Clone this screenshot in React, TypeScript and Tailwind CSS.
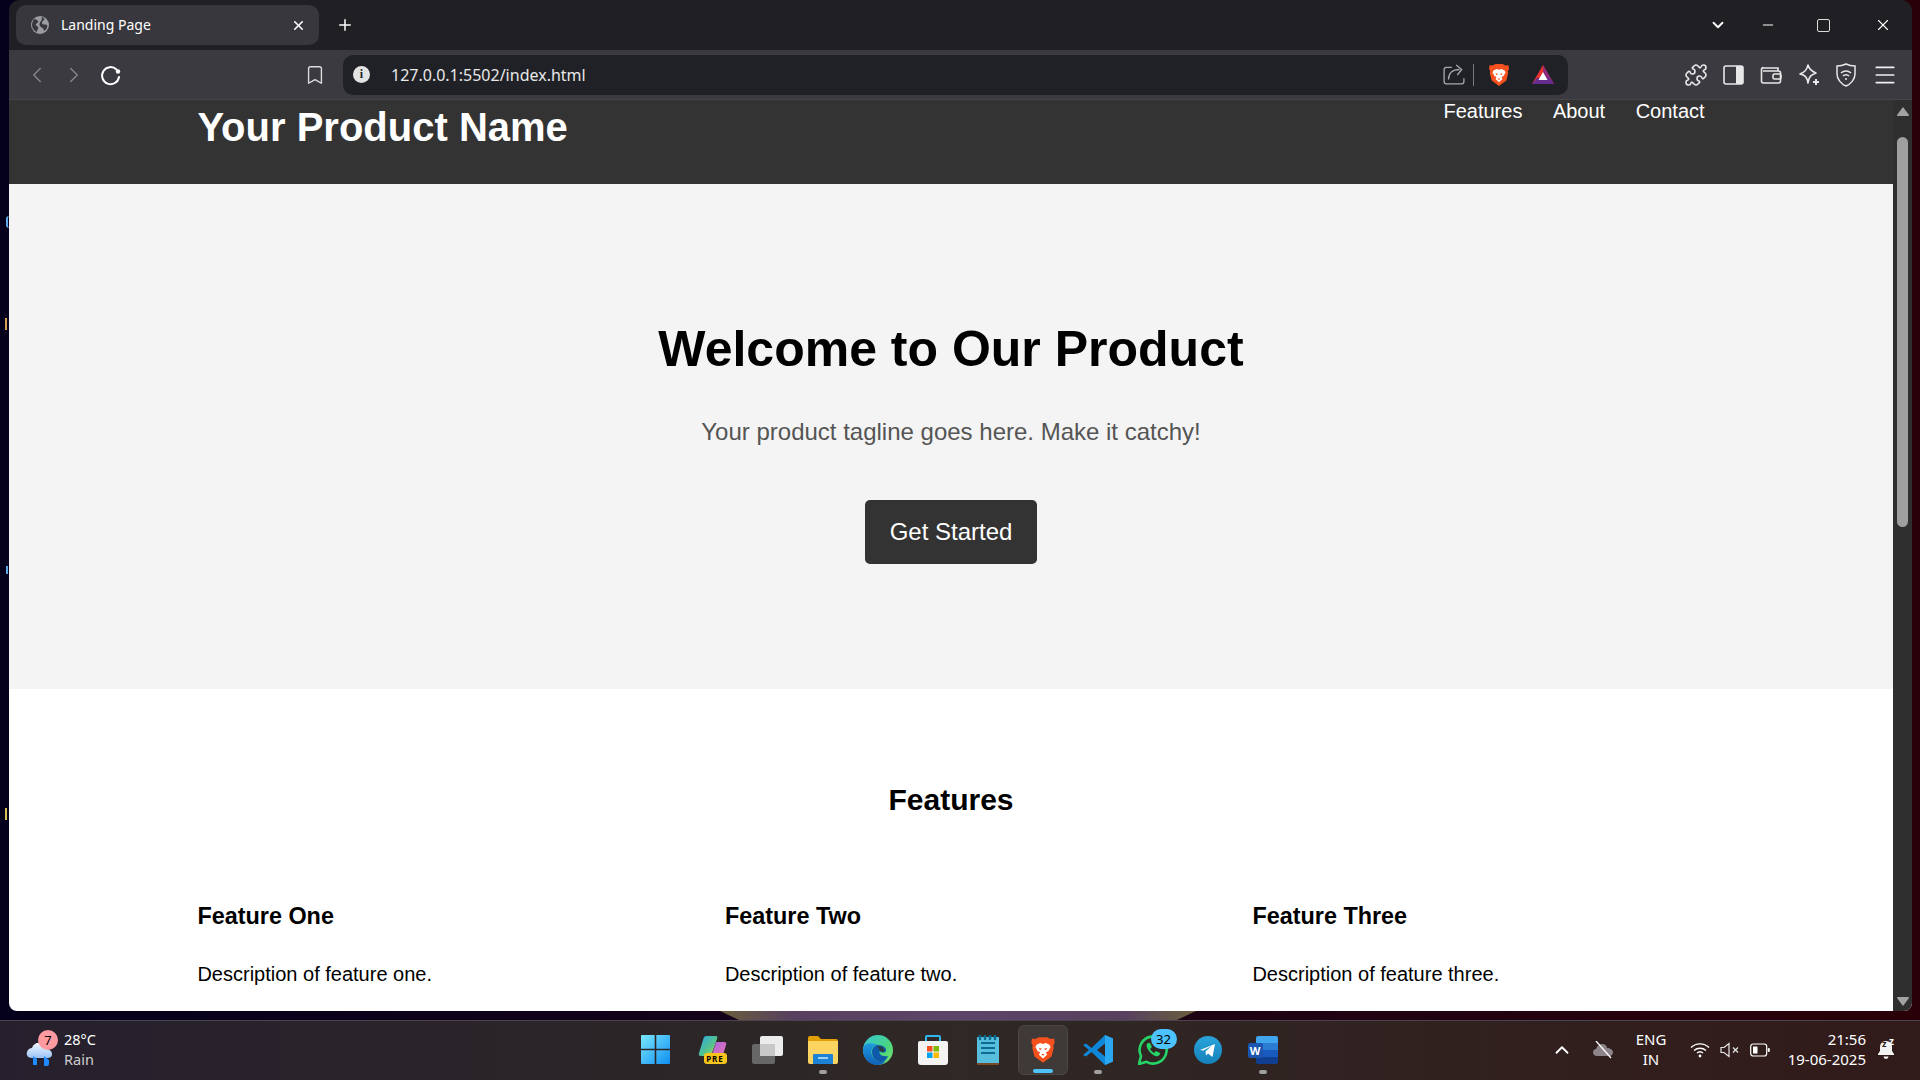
import React from "react";
import { ChevronLeft, ChevronRight, Bookmark, Puzzle, Plus, X, ChevronDown, Minus, Menu, ChevronUp } from "lucide-react";

const Brave = ({ s = 24 }: { s?: number }) => (
  <svg width={s} height={s} viewBox="0 0 24 24">
    <path d="M5.5 2.5 L8.5 1 H15.5 L18.5 2.5 L21.5 2.2 L22 6 L20.8 8 L21.2 10 L19.3 17.5 L12 23 L4.7 17.5 L2.8 10 L3.2 8 L2 6 L2.5 2.2Z" fill="#f4511e" />
    <path d="M6.5 7.5 L9.5 6 L12 6.8 L14.5 6 L17.5 7.5 L18.5 9.5 L16.5 13 L14.5 14 L15.5 16 L12 19.3 L8.5 16 L9.5 14 L7.5 13 L5.5 9.5Z" fill="#fff" />
    <path d="M8.5 10 L11 11 L9.5 12.3Z M15.5 10 L13 11 L14.5 12.3Z M10.5 15.5 H13.5 L12 17Z" fill="#f4511e" />
  </svg>
);

const IconBox = ({ children, w = 55 }: { children: React.ReactNode; w?: number }) => (
  <div className="flex items-center justify-center shrink-0 h-[52px]" style={{ width: w }}>{children}</div>
);

const Dot = () => <span className="absolute bottom-[2px] left-1/2 -translate-x-1/2 w-[8px] h-[4px] rounded-full bg-[#a0a0a0]" />;

function Taskbar() {
  return (
    <div className="h-[60px] border-t border-[#4b4450] pb-[2px] grid grid-cols-[1fr_auto_1fr] items-center bg-gradient-to-r from-[#26202e] via-[#2f2825] to-[#311a1a] text-white [font-family:'Noto_Sans',sans-serif]">
      <div className="flex items-center pl-[24px] gap-[4px]">
        <div className="relative w-[36px] h-[36px]">
          <svg width="36" height="36" viewBox="0 0 36 36">
            <defs><linearGradient id="cl" x1="0" y1="0" x2="0" y2="1"><stop offset="0" stopColor="#f2f7ff" /><stop offset="1" stopColor="#9cc4f5" /></linearGradient></defs>
            <path d="M8 26c-4 0-6-3-5-6 1-3 3-4 5-4 1-4 5-6 9-5 3 1 5 3 5 6 3 0 6 2 6 5s-2 4-5 4Z" fill="url(#cl)" />
            <path d="M9 24l4 3v6h-4Z M20 24l5 4v4q0 2-3 2t-2-2Z" fill="#1f8bff" />
          </svg>
          <span className="absolute left-[14px] top-[-2px] w-[20px] h-[20px] rounded-full bg-[#ff9aa0] text-black text-[13px] leading-[20px] text-center">7</span>
        </div>
        <div className="flex flex-col text-[14.5px] leading-[20px] -mt-[2px]">
          <span>28°C</span>
          <span className="text-[#cfcfcf]">Rain</span>
        </div>
      </div>

      <div className="flex items-center">
        <IconBox>
          <svg width="29" height="29" viewBox="0 0 29 29" className="-translate-x-[2px]">
            <defs><linearGradient id="win" x1="0" y1="0" x2="1" y2="1"><stop offset="0" stopColor="#7ae8ff" /><stop offset="1" stopColor="#0f8ff0" /></linearGradient></defs>
            <path d="M0 1q0-1 1-1h12.7v13.7H0ZM15.3 0H28q1 0 1 1v12.7H15.3ZM0 15.3h13.7V29H1q-1 0-1-1ZM15.3 15.3H29V28q0 1-1 1H15.3Z" fill="url(#win)" />
          </svg>
        </IconBox>
        <IconBox>
          <div className="relative w-[30px] h-[30px]">
            <svg width="30" height="26" viewBox="0 0 30 26">
              <defs>
                <linearGradient id="co1" x1="0" y1="0" x2="1" y2="1"><stop offset="0" stopColor="#2aa7e6" /><stop offset=".6" stopColor="#58c48a" /><stop offset="1" stopColor="#d8d84a" /></linearGradient>
                <linearGradient id="co2" x1="0" y1="0" x2="1" y2="1"><stop offset="0" stopColor="#a463e0" /><stop offset="1" stopColor="#f078b0" /></linearGradient>
              </defs>
              <path d="M8 1h10q2 0 1 3l-5 14q-1 3-4 3H3q-3 0-2-3L5 5q1-4 3-4Z" fill="url(#co1)" />
              <path d="M18 7h8q3 0 2 3l-3 10q-1 3-4 3h-8Z" fill="url(#co2)" />
            </svg>
            <span className="absolute left-[6px] top-[18px] w-[23px] h-[11px] rounded-[3px] bg-[#f7c41c] text-black text-[8px] font-bold leading-[11px] text-center tracking-[1px]">PRE</span>
          </div>
        </IconBox>
        <IconBox>
          <div className="relative w-[31px] h-[28px]">
            <span className="absolute right-0 top-0 w-[23px] h-[20px] rounded-[2px] bg-[#ececec]" />
            <span className="absolute left-0 bottom-0 w-[23px] h-[20px] rounded-[2px] bg-[#6f6f6f]/90" />
            <span className="absolute left-[8px] top-[8px] w-[15px] h-[12px] bg-[#c8c8c8]" />
          </div>
        </IconBox>
        <IconBox>
          <div className="relative h-[52px] flex items-center">
            <svg width="30" height="28" viewBox="0 0 30 28">
              <path d="M0 2q0-2 2-2h8l3 3h15q2 0 2 2v4H0Z" fill="#e3a008" />
              <path d="M0 5h30v21q0 2-2 2H2q-2 0-2-2Z" fill="#fcd462" />
              <path d="M5 19q0-1 1-1h18q1 0 1 1v9H5Z" fill="#1b82d6" />
              <rect x="10" y="21" width="10" height="2" fill="#9fd0f5" />
            </svg>
            <Dot />
          </div>
        </IconBox>
        <IconBox>
          <svg width="30" height="30" viewBox="0 0 30 30">
            <defs>
              <linearGradient id="ed" x1="0" y1="0" x2="1" y2="1"><stop offset="0" stopColor="#36c5d8" /><stop offset=".6" stopColor="#4bd67e" /><stop offset="1" stopColor="#7ee06a" /></linearGradient>
              <linearGradient id="ed2" x1="0" y1="0" x2="0" y2="1"><stop offset="0" stopColor="#1f9be0" /><stop offset="1" stopColor="#0f5fb5" /></linearGradient>
            </defs>
            <circle cx="15" cy="15" r="15" fill="url(#ed)" />
            <path d="M0 15C1 6 9 8 15 10c-5 0-8 5-6 10 2 6 9 9 14 6-3 3-6 4-8 4C7 30 0 24 0 15Z" fill="url(#ed2)" />
            <path d="M15 10c5 0 9 3 8 6-1 2-5 2-6 0-2 3 2 6 8 5-1 3-3 5-5 6-5 1-11-3-11-10 0-4 3-7 6-7Z" fill="#0f5aa8" />
            <path d="M15 11c4 0 7 3 6.500 5-1 1.500-3.500 1-4.500 0-1-2-3-4-2-5Z" fill="#2f3a36" opacity=".9" />
          </svg>
        </IconBox>
        <IconBox>
          <svg width="30" height="30" viewBox="0 0 30 30">
            <path d="M8 6V2q0-1 1-1h12q1 0 1 1v4" fill="none" stroke="#2fb8ee" strokeWidth="2" />
            <path d="M0 8q0-2 2-2h26q2 0 2 2v19q0 3-3 3H3q-3 0-3-3Z" fill="#f3f3f3" />
            <rect x="9" y="11" width="5.500" height="5.500" fill="#f25022" /><rect x="15.500" y="11" width="5.500" height="5.500" fill="#7fba00" />
            <rect x="9" y="17.500" width="5.500" height="5.500" fill="#00a4ef" /><rect x="15.500" y="17.500" width="5.500" height="5.500" fill="#ffb900" />
          </svg>
        </IconBox>
        <IconBox>
          <svg width="24" height="30" viewBox="0 0 24 30" className="translate-x-[1px]">
            <rect x="0" y="2" width="22" height="28" fill="#7a4a22" rx="1" />
            <rect x="0" y="2" width="22" height="26" fill="#58bede" />
            <path d="M4 8h14M4 13h14M4 18h14" stroke="#0f6a8f" strokeWidth="2" />
            <path d="M3 0v4M8 0v4M13 0v4M18 0v4" stroke="#0a6b8e" strokeWidth="2.500" strokeLinecap="round" />
          </svg>
        </IconBox>
        <div className="relative w-[50px] h-[50px] mx-[2.5px] rounded-[6px] bg-[#3f3a38] border border-[#4a4644] flex items-center justify-center">
          <Brave s={28} />
          <span className="absolute bottom-[1px] left-1/2 -translate-x-1/2 w-[20px] h-[4px] rounded-full bg-[#4fc3f7]" />
        </div>
        <IconBox>
          <div className="relative h-[52px] flex items-center">
            <svg width="30" height="30" viewBox="0 0 30 30">
              <path d="M22 0l8 3.500v23L22 30 8.500 17 3 21.500 0 20l6-5-6-5 3-1.500L8.500 13Zm0 8.500L14 15l8 6.500Z" fill="#0f87d8" />
              <path d="M22 0l8 3.500v23L22 30Z" fill="#2aa7ee" />
            </svg>
            <Dot />
          </div>
        </IconBox>
        <IconBox>
          <div className="relative w-[30px] h-[30px]">
            <svg width="30" height="30" viewBox="0 0 30 30">
              <path d="M1 29l2-8a13.500 13.500 0 1 1 5.500 5.800Z" fill="none" stroke="#25d366" strokeWidth="2.600" strokeLinejoin="round" />
              <path d="M10 8c-2 1-2 4 1 8s7 6 9 5 2-2 2-3l-4-2-2 2c-2-1-3-3-4-4l2-2-2-4Z" fill="#25d366" />
            </svg>
            <span className="absolute left-[13px] top-[-6px] w-[26px] h-[20px] rounded-full bg-[#4cc2ff] text-black text-[13px] leading-[20px] text-center">32</span>
          </div>
        </IconBox>
        <IconBox>
          <svg width="28" height="28" viewBox="0 0 28 28">
            <defs><linearGradient id="tg" x1="0" y1="0" x2="0" y2="1"><stop offset="0" stopColor="#2aa4dc" /><stop offset="1" stopColor="#1580ba" /></linearGradient></defs>
            <circle cx="14" cy="14" r="14" fill="url(#tg)" />
            <path d="M6 14L21 8l-2.500 13-4.500-3.500-2 2-.5-4 6-5.500-8 4.500Z" fill="#fff" />
          </svg>
        </IconBox>
        <IconBox>
          <div className="relative h-[52px] w-[30px] flex items-center">
            <div className="relative w-[30px] h-[28px]">
              <div className="absolute right-0 top-0 w-[22px] h-[28px] rounded-[2px] overflow-hidden flex flex-col">
                <span className="flex-1 bg-[#41a5ee]" /><span className="flex-1 bg-[#2b7cd3]" /><span className="flex-1 bg-[#185abd]" /><span className="flex-1 bg-[#103f91]" />
              </div>
              <span className="absolute left-0 top-[7px] w-[15px] h-[15px] rounded-[2px] bg-[#1a55b0] text-white text-[11px] font-bold leading-[15px] text-center">W</span>
            </div>
            <Dot />
          </div>
        </IconBox>
      </div>

      <div className="flex items-center justify-end">
        <ChevronUp size={22} strokeWidth={2} className="text-white mr-[19px]" />
        <svg width="22" height="18" viewBox="0 0 22 18" className="mr-[21px]">
          <path d="M5 15c-3 0-4-2-4-4s2-3 3-3c1-3 3-5 6-5s5 2 5 4c3 0 6 2 6 4s-1 4-4 4Z" fill="#8c8488" />
          <path d="M4 0l15 17" stroke="#fff" strokeWidth="1.300" />
        </svg>
        <div className="flex flex-col items-center text-[15px] leading-[20px] w-[32px] mr-[23px] -mt-[2px]">
          <span>ENG</span>
          <span>IN</span>
        </div>
        <svg width="20" height="16" viewBox="0 0 20 16" fill="none" stroke="#fff" strokeWidth="1.400" className="mr-[10px]">
          <path d="M1 5.500a13 13 0 0 1 18 0M4 8.500a9 9 0 0 1 12 0M7 11a4.500 4.500 0 0 1 6 0" />
          <circle cx="10" cy="14" r="1.400" fill="#fff" stroke="none" />
        </svg>
        <svg width="20" height="16" viewBox="0 0 20 16" fill="none" stroke="#e8e8e8" strokeWidth="1.200" className="mr-[10px]">
          <path d="M1 5.500h3L9 1.500v13L4 10.500H1Z" />
          <path d="M13 5.500l5 5M18 5.500l-5 5" />
        </svg>
        <svg width="20" height="14" viewBox="0 0 20 14" fill="none" className="mr-[16px]">
          <rect x=".7" y="1" width="16" height="12" rx="2.500" stroke="#fff" strokeWidth="1.200" />
          <rect x="3" y="3.500" width="4.500" height="7" rx=".5" fill="#fff" />
          <rect x="17.800" y="5" width="2" height="4" rx="1" fill="#fff" />
        </svg>
        <div className="flex flex-col items-end text-[15px] leading-[20px] w-[80px] -mt-[2px]">
          <span>21:56</span>
          <span className="whitespace-nowrap">19-06-2025</span>
        </div>
        <div className="relative w-[18px] h-[20px] ml-[11px] mr-[25px]">
          <svg width="18" height="20" viewBox="0 0 18 20"><path d="M9 1c-4 0-6 3-6 6v4l-2 3v1h16v-1l-2-3V7c0-3-2-6-6-6ZM6.500 16.500a2.500 2.500 0 0 0 5 0Z" fill="#f2f2f2" /></svg>
          <span className="absolute left-[5px] top-[-3px] text-[9px] font-bold leading-[14px] text-[#2b1b1b]">z</span>
          <span className="absolute left-[12px] top-[-6px] text-[10px] font-bold leading-[14px] text-white">z</span>
        </div>
      </div>
    </div>
  );
}

function TabBar() {
  return (
    <div className="h-[50px] shrink-0 bg-[#1f1f24] flex items-center pl-[7px] text-white [font-family:'Noto_Sans',sans-serif]">
      <div className="w-[303px] h-[40px] rounded-[10px] bg-[#37373d] flex items-center pl-[15px] pr-[13px] gap-[12px]">
        <svg width="18" height="18" viewBox="0 0 18 18">
          <circle cx="9" cy="9" r="9" fill="#9a9ca1" />
          <path d="M3 3c2 0 3 1 4 2s-1 2-2 3 1 2 2 3-1 3-1 5c-3-1-5-4-5-7 0-2 1-4 2-6ZM11 1c2 1 3 2 2 3s-2 1-2 3 3 1 5 2c1 2-1 5-3 6 0-2-1-3-3-4s-2-4 0-6 0-3 1-4Z" fill="#37373d" />
        </svg>
        <span className="flex-1 text-[14px] leading-none whitespace-nowrap">Landing Page</span>
        <X size={15} strokeWidth={2.500} className="text-white" />
      </div>
      <Plus size={18} strokeWidth={2} className="ml-[17px] text-white" />
      <div className="flex-1" />
      <ChevronDown size={18} strokeWidth={2.500} className="text-white mr-[33px]" />
      <Minus size={16} strokeWidth={1.500} className="text-white mr-[41px]" />
      <span className="w-[13px] h-[13px] rounded-[2px] border-[1.5px] border-[#ddd] mr-[44px]" />
      <X size={18} strokeWidth={1.500} className="text-white mr-[20px]" />
    </div>
  );
}

function Toolbar() {
  return (
    <div className="h-[50px] shrink-0 bg-[#3a3a40] border-b border-[#444449] flex items-center pl-[15px] text-white [font-family:'Noto_Sans',sans-serif]">
      <ChevronLeft size={26} strokeWidth={1.300} className="text-[#85858a] mr-[11px]" />
      <ChevronRight size={26} strokeWidth={1.300} className="text-[#85858a] mr-[12px]" />
      <svg width="24" height="24" viewBox="0 0 24 24" fill="none" stroke="#fff" strokeWidth="2" strokeLinecap="round">
        <path d="M20 14a8.500 8.500 0 1 1-2.500-7.500" />
        <circle cx="19" cy="8.500" r="2.200" fill="#fff" stroke="none" />
      </svg>
      <div className="w-[181px]" />
      <Bookmark size={22} strokeWidth={1.500} className="text-[#dedede]" />
      <div className="ml-[17px] w-[1225px] h-[40px] rounded-[10px] bg-[#202126] flex items-center pl-[10px] pr-[13px]">
        <span className="w-[17px] h-[17px] rounded-full bg-[#e3e3e3] text-[#202126] text-[12px] font-bold leading-[17px] text-center [font-family:'Liberation_Serif',serif]">i</span>
        <span className="ml-[21px] flex-1 text-[16px] text-[#e8e8e8] leading-none">127.0.0.1:5502/index.html</span>
        <svg width="22" height="22" viewBox="0 0 20 20" fill="none" stroke="#a8a8ac" strokeWidth="1.200" className="translate-x-[2px]">
          <path d="M8 3H3q-2 0-2 2v11q0 2 2 2h14q2 0 2-2v-3" />
          <path d="M5 14c0-6 4-9 10-9M12 1l5 4-4 5" />
        </svg>
        <span className="w-px h-[22px] bg-[#7a7a7e] ml-[10px] mr-[13px]" />
        <Brave s={24} />
        <svg width="24" height="22" viewBox="0 0 24 22" className="ml-[20px]">
          <path d="M12 1 L1 20 H23Z" fill="#e5342e" />
          <path d="M12 1 L23 20 H13 Z" fill="#8a2a80" />
          <path d="M1 20 L6 14 H18 L23 20 Z" fill="#662d91" />
          <path d="M12 8 L7.500 16 H16.500Z" fill="#fff" />
        </svg>
      </div>
      <div className="flex-1" />
      <Puzzle size={24} strokeWidth={1.600} className="text-[#e8e8e8] mr-[15px]" />
      <svg width="21" height="20" viewBox="0 0 21 20" className="mr-[16px]">
        <rect x="1" y="1" width="19" height="18" rx="2" fill="none" stroke="#e8e8e8" strokeWidth="1.600" />
        <rect x="13" y="1" width="7" height="18" fill="#e8e8e8" />
      </svg>
      <svg width="22" height="20" viewBox="0 0 22 20" fill="none" stroke="#e8e8e8" strokeWidth="1.600" className="mr-[16px]">
        <path d="M3 3h15v3M1.500 5q0-2.500 2-2.500M1.500 4v12q0 2 2 2h15q2 0 2-2V8q0-2-2-2H3" />
        <rect x="13" y="9" width="8" height="5" rx="1.500" />
      </svg>
      <svg width="22" height="22" viewBox="0 0 22 22" fill="none" stroke="#e8e8e8" strokeWidth="1.600" className="mr-[16px]">
        <path d="M10 1c1 4 3 6 8 8-5 2-7 3-8 10-1-6-3-8-8-9 5-2 7-4 8-9Z" strokeLinejoin="round" />
        <path d="M18 15v6M15 18h6" strokeWidth="2" />
      </svg>
      <svg width="20" height="24" viewBox="0 0 20 24" fill="none" stroke="#e8e8e8" strokeWidth="1.500" className="mr-[16px]">
        <path d="M10 1c3 1.500 6 2 9 2v8c0 5-4 10-9 12C5 21 1 16 1 11V3c3 0 6-.5 9-2Z" />
        <path d="M5 10a7.500 7.500 0 0 1 10 0M7 13a4 4 0 0 1 6 0" />
        <circle cx="10" cy="16" r="1" fill="#e8e8e8" stroke="none" />
      </svg>
      <Menu size={26} strokeWidth={1.600} className="text-[#f0f0f0] mr-[14px]" />
    </div>
  );
}

function Page() {
  return (
    <div className="flex-1 min-h-0 flex bg-white rounded-b-[8px] overflow-hidden">
      <div className="flex-1 min-w-0 overflow-hidden text-black [font-family:'Liberation_Sans',Arial,sans-serif]">
        <header className="h-[84px] bg-[#333] text-white">
          <div className="w-[80%] mx-auto flex justify-between items-start">
            <h1 className="mt-[4px] text-[40px] leading-[46px] font-bold">Your Product Name</h1>
            <nav className="flex gap-[30.5px] text-[20px] leading-[23px]">
              <a>Features</a>
              <a>About</a>
              <a>Contact</a>
            </nav>
          </div>
        </header>
        <section className="h-[505px] bg-[#f4f4f4] flex flex-col items-center pt-[138px]">
          <h2 className="text-[50px] leading-[55px] font-bold">Welcome to Our Product</h2>
          <p className="mt-[41px] text-[24px] leading-[28px] text-[#555]">Your product tagline goes here. Make it catchy!</p>
          <button className="mt-[54px] w-[172px] h-[64px] rounded-[5px] bg-[#333] text-white text-[24px]">Get Started</button>
        </section>
        <section className="w-[80%] mx-auto pt-[94px]">
          <h2 className="text-[30px] leading-[34px] font-bold text-center">Features</h2>
          <div className="mt-[86px] grid grid-cols-[repeat(3,502px)] gap-[25.5px]">
            {["One|one", "Two|two", "Three|three"].map((f) => {
              const [a, b] = f.split("|");
              return (
                <div key={a}>
                  <h3 className="text-[23.4px] leading-[27px] font-bold">Feature {a}</h3>
                  <p className="mt-[33px] text-[20px] leading-[23px]">Description of feature {b}.</p>
                </div>
              );
            })}
          </div>
        </section>
      </div>
      <div className="w-[19px] shrink-0 bg-[#2f2f2f] flex flex-col items-center pt-[7px] pb-[5px]">
        <svg width="14" height="9" viewBox="0 0 14 9"><path d="M7 0l6 8q.3 1-1 1H2q-1.300 0-1-1Z" fill="#a3a3a3" /></svg>
        <div className="mt-[21px] w-[11px] h-[390px] rounded-full bg-[#9f9f9f]" />
        <div className="flex-1" />
        <svg width="14" height="9" viewBox="0 0 14 9"><path d="M7 9L1 1q-.3-1 1-1h10q1.300 0 1 1Z" fill="#a3a3a3" /></svg>
      </div>
    </div>
  );
}

export default function App() {
  return (
    <div className="w-[1920px] h-[1080px] overflow-hidden flex flex-col bg-gradient-to-r from-[#05001b] via-[#1a0318] to-[#2a0008]">
      <div className="flex-1 min-h-0 relative pl-[9px] pr-[8px] pb-[9px]">
        <div className="absolute left-[6px] top-[216px] w-[3px] h-[12px] rounded-l-full border-l-2 border-[#5aa8e8]" />
        <div className="absolute left-[5px] top-[318px] w-[4px] h-[12px] border-l-2 border-[#d8a050]" />
        <div className="absolute left-[6px] top-[566px] w-[3px] h-[8px] border-l-2 border-[#5aa8e8]" />
        <div className="absolute left-[5px] top-[808px] w-[4px] h-[12px] border-l-2 border-[#d8c050]" />
        <div className="absolute left-[720px] right-[724px] bottom-0 h-[9px] bg-[linear-gradient(90deg,#6a5f3c_0%,#57405f_15%,#5c4468_50%,#57405f_85%,#6a5f3c_100%)] [clip-path:polygon(0_0,100%_0,96%_100%,4%_100%)]" />
        <div className="relative h-full flex flex-col rounded-t-[10px] overflow-hidden">
          <TabBar />
          <Toolbar />
          <Page />
        </div>
      </div>
      <Taskbar />
    </div>
  );
}
